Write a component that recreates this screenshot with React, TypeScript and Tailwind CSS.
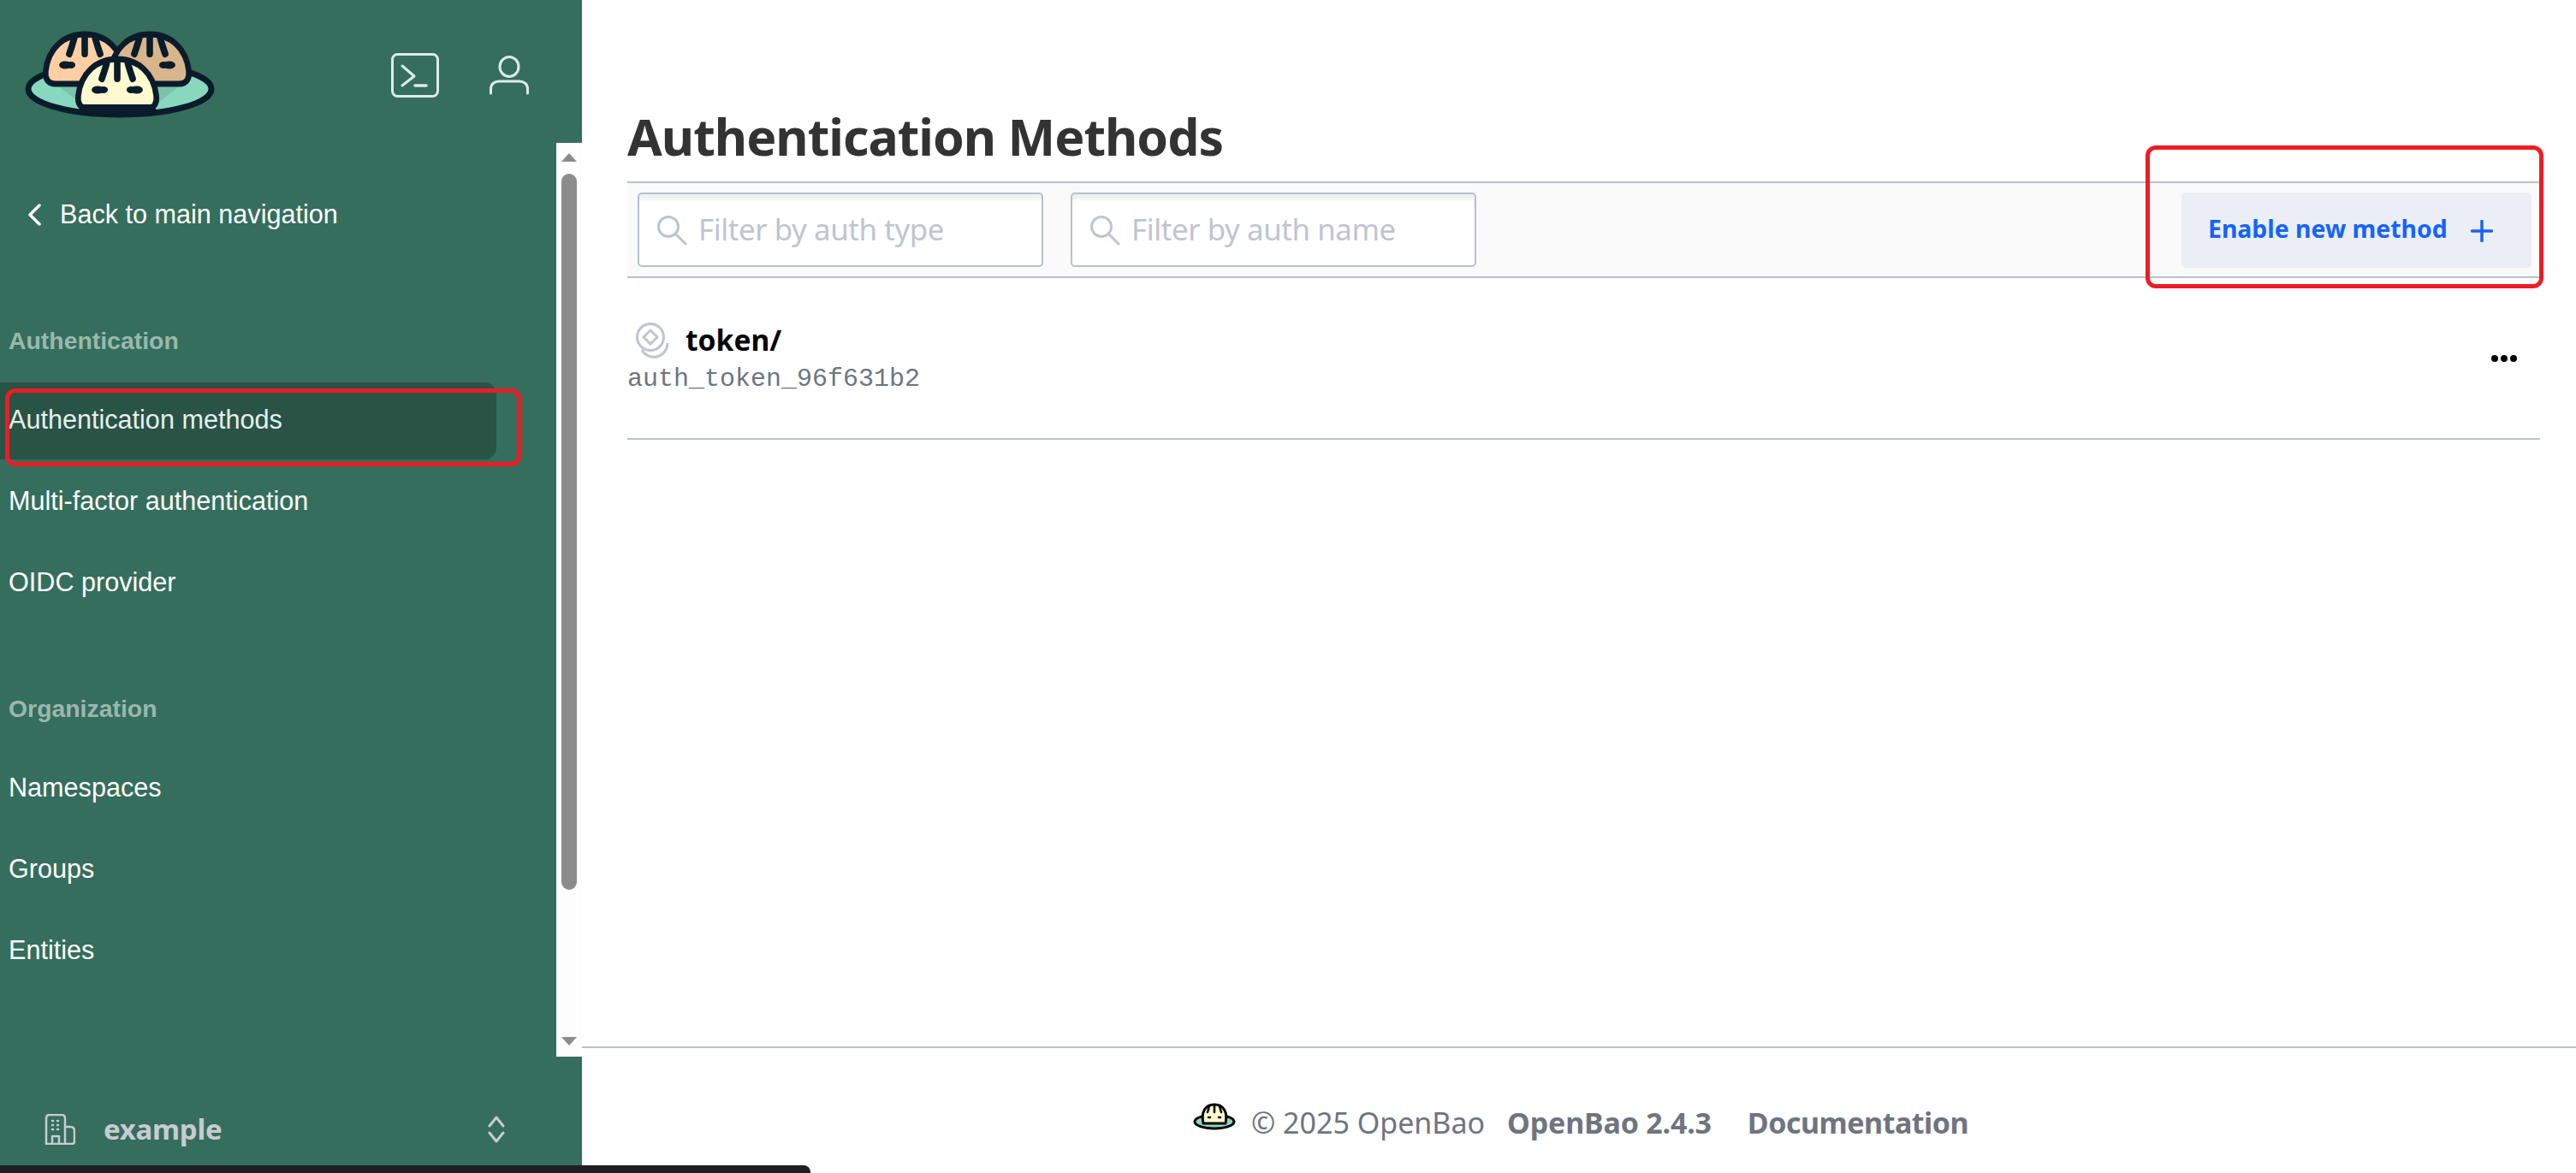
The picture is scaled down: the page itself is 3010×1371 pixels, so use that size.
const INK = "#0a1c2b";

function Bun({ x, y, fill }: { x: number; y: number; fill: string }) {
  return (
    <g transform={`translate(${x} ${y}) scale(0.95 1)`}>
      <path
        d="M-36 55 C-46 55 -49 48 -48 40 C-45 14 -26 -3 0 -3 C26 -3 45 14 48 40 C49 48 46 55 36 55 Z"
        fill={fill}
        stroke={INK}
        strokeWidth="7"
        strokeLinejoin="round"
      />
      <g stroke={INK} strokeWidth="8" strokeLinecap="round" fill="none">
        <path d="M0 0 L0 20" />
        <path d="M-13 2 Q-16 12 -19 20" />
        <path d="M13 2 Q16 12 19 20" />
      </g>
      <g fill={INK}>
        <ellipse cx="-24" cy="33" rx="7.5" ry="4.5" />
        <ellipse cx="-17" cy="33" rx="5.5" ry="4" />
        <ellipse cx="17" cy="33" rx="5.5" ry="4" />
        <ellipse cx="24" cy="33" rx="7.5" ry="4.5" />
      </g>
    </g>
  );
}

function Logo() {
  return (
    <svg width="260" height="145" viewBox="0 0 260 145" className="shrink-0">
      <ellipse cx="140" cy="104" rx="107" ry="30" fill="#88d8c0" stroke={INK} strokeWidth="7" />
      <path d="M62 97 L100 124 L180 124 L214 97 Z" fill="#7cc0ac" />
      <Bun x={99} y={43} fill="#ffcfa3" />
      <Bun x={175} y={43} fill="#d9b58c" />
      <Bun x={137} y={72} fill="#fdfad0" />
      <path d="M94 122 L180 122 L184 132 Q140 137 92 132 Z" fill={INK} />
    </svg>
  );
}

function MiniLogo() {
  return (
    <svg width="50" height="32" viewBox="0 0 50 32" className="shrink-0 -mt-[14px]">
      <ellipse cx="25" cy="22" rx="23" ry="8" fill="#88d8c0" stroke="#000" strokeWidth="3" />
      <path
        d="M12 24 C9 10 15 2 25 2 C35 2 41 10 38 24 Z"
        fill="#fdfad0"
        stroke="#000"
        strokeWidth="3"
        strokeLinejoin="round"
      />
      <path d="M25 3 V11 M19 4 L17 11 M31 4 L33 11" stroke="#000" strokeWidth="2.5" strokeLinecap="round" />
      <path d="M18 17 h2 M30 17 h2" stroke="#000" strokeWidth="2.5" strokeLinecap="round" />
    </svg>
  );
}

function Search() {
  return (
    <svg width="36" height="36" viewBox="0 0 36 36" fill="none" stroke="#bfc4d0" strokeWidth="3" strokeLinecap="round" className="shrink-0">
      <circle cx="14" cy="14" r="11.5" />
      <path d="M22.5 22.5 L34 34" />
    </svg>
  );
}

function FilterInput({ placeholder }: { placeholder: string }) {
  return (
    <label className="flex h-[87px] w-[474px] items-center gap-[13px] rounded-[5px] border-2 border-[#babfd0] bg-white pl-[20px] shadow-[inset_0_10px_4px_-4px_#f0f0f0]">
      <Search />
      <input
        readOnly
        placeholder={placeholder}
        className="w-[390px] bg-transparent text-[34.8px] text-[#333] outline-none placeholder:text-[#bfc4d0] tracking-[-0.4px]"
      />
    </label>
  );
}

function NavHeading({ label, className }: { label: string; className: string }) {
  return <div className={`flex h-[40px] items-center pl-[10px] text-[28.4px] font-bold text-[#9ab8ae] ${className}`}>{label}</div>;
}

function NavItem({ label, active }: { label: string; active?: boolean }) {
  return (
    <a
      className={`mb-[5px] flex h-[90px] w-[580px] items-center rounded-r-[14px] pb-[2px] pl-[10px] text-[30.6px] ${
        active ? "bg-[#285345] text-[#e6efec]" : "text-white"
      }`}
    >
      {label}
    </a>
  );
}

function Scrollbar() {
  return (
    <div className="flex w-[30px] shrink-0 flex-col items-center bg-[#fdfdfd] pt-[12px] pb-[13px]">
      <svg width="18" height="10" viewBox="0 0 18 10">
        <path d="M9 0 L18 10 H0 Z" fill="#8c8c8c" />
      </svg>
      <div className="mt-[14px] h-[837px] w-[18px] rounded-full bg-[#8c8c8c]" />
      <svg width="18" height="10" viewBox="0 0 18 10" className="mt-auto">
        <path d="M0 0 H18 L9 10 Z" fill="#8c8c8c" />
      </svg>
    </div>
  );
}

function Sidebar() {
  return (
    <aside className="flex h-full w-[680px] shrink-0 flex-col bg-[#356e5c]" style={{ fontFamily: '"Liberation Sans", Arial, sans-serif' }}>
      <header className="flex h-[167px] shrink-0 items-start justify-between pr-[62px]">
        <Logo />
        <div className="flex items-start gap-[59px] pt-[62px]">
          <svg width="56" height="52" viewBox="0 0 56 52" fill="none" stroke="#dcebe6" strokeWidth="3" strokeLinecap="round" strokeLinejoin="round">
            <rect x="1.5" y="1.5" width="53" height="49" rx="6" />
            <path d="M13 15 L27 27 L13 38" />
            <path d="M28 38 H41" strokeWidth="3.5" />
          </svg>
          <svg width="46" height="46" viewBox="0 0 46 46" fill="none" stroke="#dcebe6" strokeWidth="3" strokeLinecap="round" className="mt-[3px]">
            <ellipse cx="23" cy="13" rx="11" ry="11.5" />
            <path d="M1.5 44 V39 C1.5 33 6 30 11 30 H35 C40 30 44.5 33 44.5 39 V44" />
          </svg>
        </div>
      </header>

      <div className="flex h-[1068px] shrink-0">
        <nav className="min-w-0 flex-1 overflow-hidden">
          <a className="mt-[64px] flex h-[40px] items-center pl-[32px] text-[30.6px] text-white">
            <svg width="16" height="26" viewBox="0 0 16 26" fill="none" stroke="#fff" strokeWidth="3.5" strokeLinecap="round" strokeLinejoin="round" className="mr-[22px]">
              <path d="M14 2 L3 13 L14 24" />
            </svg>
            Back to main navigation
          </a>
          <NavHeading label="Authentication" className="mt-[107px] mb-[29px]" />
          <NavItem label="Authentication methods" active />
          <NavItem label="Multi-factor authentication" />
          <NavItem label="OIDC provider" />
          <NavHeading label="Organization" className="mt-[81px] mb-[29px]" />
          <NavItem label="Namespaces" />
          <NavItem label="Groups" />
          <NavItem label="Entities" />
        </nav>
        <Scrollbar />
      </div>

      <div className="flex items-start pl-[52px] pr-[90px] pt-[67px]" style={{ fontFamily: '"Noto Sans", sans-serif' }}>
        <svg width="36" height="36" viewBox="0 0 36 36" fill="none" stroke="#c8cbd2" strokeWidth="2.5" strokeLinejoin="round" className="shrink-0">
          <path d="M2 35 V5 Q2 1 6 1 H20 Q24 1 24 5 V35 Z" />
          <path d="M24 15 H30 Q35 15 35 20 V32 Q35 35 32 35 H24" />
          <path d="M9 35 V26 H17 V35" />
          <path d="M9 8h1M15 8h1M9 13h1M15 13h1M9 18h1M15 18h1" strokeWidth="2.5" strokeLinecap="round" />
        </svg>
        <span className="ml-[33px] text-[33px] font-bold leading-[36px] text-[#c8cbd2] tracking-[-0.3px]">example</span>
        <svg width="20" height="32" viewBox="0 0 20 32" fill="none" stroke="#c8cbd2" strokeWidth="3" strokeLinecap="round" strokeLinejoin="round" className="ml-auto mt-[2px]">
          <path d="M2 12 L10 2 L18 12" />
          <path d="M2 20 L10 30 L18 20" />
        </svg>
      </div>
    </aside>
  );
}

function Main() {
  return (
    <main className="flex h-full min-w-0 flex-1 flex-col bg-white" style={{ fontFamily: '"Noto Sans", sans-serif' }}>
      <div className="flex min-h-0 flex-1 flex-col pl-[53px] pr-[42px]">
        <h1 className="h-[212px] shrink-0 pt-[120px] text-[59px] font-bold leading-[78px] tracking-[-1px] text-[#333]">Authentication Methods</h1>

        <div className="flex h-[113px] shrink-0 items-center border-y-2 border-[#babfd0] bg-[#fafafa] pl-[12px] pr-[10px]">
          <div className="flex gap-[32px]">
            <FilterInput placeholder="Filter by auth type" />
            <FilterInput placeholder="Filter by auth name" />
          </div>
          <button className="ml-auto flex h-[88px] w-[409px] items-center rounded-[5px] bg-[#ebeef4] pb-[3px] pl-[31px] text-[28.4px] font-bold text-[#1563ff]">
            Enable new method
            <svg width="26" height="26" viewBox="0 0 26 26" fill="none" stroke="#1563ff" strokeWidth="3.5" strokeLinecap="round" className="ml-[27px] mt-[6px]">
              <path d="M13 1.5 V24.5 M1.5 13 H24.5" />
            </svg>
          </button>
        </div>

        <div className="flex h-[189px] shrink-0 items-center justify-between border-b-2 border-[#babfd0] pr-[27px]">
          <div>
            <div className="flex h-[46px] items-center pl-[10px]">
              <svg width="40" height="42" viewBox="0 0 40 42" fill="none" stroke="#bfc4d0" strokeWidth="3" className="shrink-0">
                <path d="M7 32 A16 16 0 0 0 37 24" />
                <circle cx="17" cy="17" r="15.5" />
                <path d="M17 9 L25 17 L17 25 L9 17 Z" strokeLinejoin="round" />
              </svg>
              <span className="ml-[18px] -mt-[2px] text-[33.6px] font-bold leading-[46px] text-black">token/</span>
            </div>
            <div className="mt-[4px] mb-[2px] text-[30px] leading-[36px] text-[#6f7482]" style={{ fontFamily: '"Liberation Mono", monospace' }}>
              auth_token_96f631b2
            </div>
          </div>
          <div className="flex gap-[3px]">
            <span className="size-[8px] rounded-full bg-black" />
            <span className="size-[8px] rounded-full bg-black" />
            <span className="size-[8px] rounded-full bg-black" />
          </div>
        </div>
      </div>

      <footer className="flex h-[148px] shrink-0 items-center justify-center border-t-2 border-[#babfd0] pl-[4px] pt-[28px] text-[34px] text-[#6f7480]">
        <MiniLogo />
        <span className="ml-[18px]">© 2025 OpenBao</span>
        <span className="ml-[26px] font-bold tracking-[-0.2px]">OpenBao 2.4.3</span>
        <span className="ml-[42px] font-bold tracking-[-0.5px]">Documentation</span>
      </footer>
    </main>
  );
}

export default function App() {
  return (
    <div className="relative flex h-[1371px] w-[3010px] overflow-hidden">
      <Sidebar />
      <Main />
      <div className="pointer-events-none absolute left-[6px] top-[454px] h-[91px] w-[603px] rounded-[12px] border-[5px] border-[#ed1c24]" />
      <div className="pointer-events-none absolute left-[2507px] top-[170px] h-[167px] w-[465px] rounded-[12px] border-[5px] border-[#ed1c24]" />
      <div className="absolute bottom-0 left-0 h-[9px] w-[947px] rounded-tr-[8px] bg-[#1f1f23]" />
    </div>
  );
}
